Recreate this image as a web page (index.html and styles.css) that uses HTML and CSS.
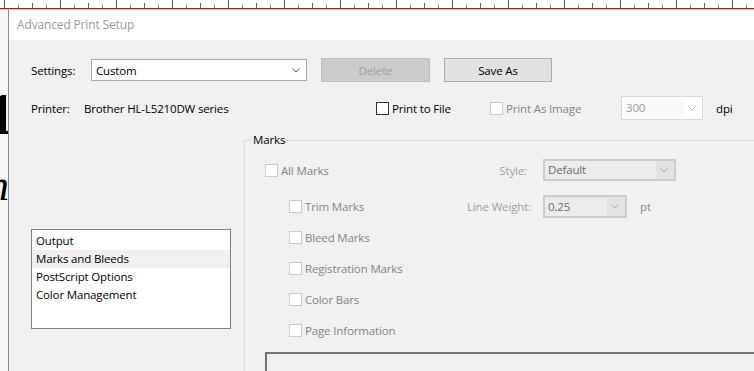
FILE: index.html
```html
<!DOCTYPE html>
<html lang="en">
<head>
    <meta charset="UTF-8">
    <meta name="viewport" content="width=device-width, initial-scale=1.0">
    <title>Advanced Print Setup</title>
    <link rel="stylesheet" href="styles.css">
</head>
<body>
    <div class="screen">
        <div class="ruler"></div>
        <div class="stage">
            <div class="doc-edge">
                <span class="glyph-one">1</span>
                <span class="glyph-n">n</span>
            </div>

            <div class="dialog">
                <div class="titlebar">Advanced Print Setup</div>

                <div class="dialog-body">
                    <div class="row row-settings">
                        <span class="label label-settings">Settings:</span>
                        <div class="combo combo-settings">
                            <span class="combo-value">Custom</span>
                            <svg class="chevron" width="8" height="5" viewBox="0 0 8 5"><path d="M0.5 0.5 L4 4 L7.5 0.5" fill="none" stroke="#606060" stroke-width="1"/></svg>
                        </div>
                        <button class="btn btn-disabled">Delete</button>
                        <button class="btn">Save As</button>
                    </div>

                    <div class="row row-printer">
                        <span class="label label-printer">Printer:</span>
                        <span class="printer-name">Brother HL-L5210DW series</span>
                        <label class="check check-file"><span class="box"></span>Print to File</label>
                        <label class="check check-image is-disabled"><span class="box"></span>Print As Image</label>
                        <div class="combo combo-dpi">
                            <span class="combo-value">300</span>
                            <svg class="chevron" width="8" height="5" viewBox="0 0 8 5"><path d="M0.5 0.5 L4 4 L7.5 0.5" fill="none" stroke="#b8b8b8" stroke-width="1"/></svg>
                        </div>
                        <span class="unit unit-dpi">dpi</span>
                    </div>

                    <div class="main">
                        <div class="sidebar">
                            <ul class="listbox">
                                <li>Output</li>
                                <li class="selected">Marks and Bleeds</li>
                                <li>PostScript Options</li>
                                <li>Color Management</li>
                            </ul>
                        </div>

                        <fieldset class="marks">
                            <legend>Marks</legend>
                            <div class="marks-body">
                                <div class="mark-row row-all">
                                    <label class="check is-disabled mark-check"><span class="box"></span>All Marks</label>
                                    <span class="field-label label-style">Style:</span>
                                    <div class="combo combo-off combo-style">
                                        <span class="combo-value">Default</span>
                                        <svg class="chevron" width="8" height="5" viewBox="0 0 8 5"><path d="M0.5 0.5 L4 4 L7.5 0.5" fill="none" stroke="#b0b0b0" stroke-width="1"/></svg>
                                    </div>
                                </div>
                                <div class="mark-row row-trim">
                                    <label class="check is-disabled mark-check sub"><span class="box"></span>Trim Marks</label>
                                    <span class="field-label label-weight">Line Weight:</span>
                                    <div class="combo combo-off combo-weight">
                                        <span class="combo-value">0.25</span>
                                        <svg class="chevron" width="8" height="5" viewBox="0 0 8 5"><path d="M0.5 0.5 L4 4 L7.5 0.5" fill="none" stroke="#b0b0b0" stroke-width="1"/></svg>
                                    </div>
                                    <span class="unit unit-pt">pt</span>
                                </div>
                                <div class="mark-row row-plain">
                                    <label class="check is-disabled sub"><span class="box"></span>Bleed Marks</label>
                                </div>
                                <div class="mark-row row-plain">
                                    <label class="check is-disabled sub"><span class="box"></span>Registration Marks</label>
                                </div>
                                <div class="mark-row row-plain">
                                    <label class="check is-disabled sub"><span class="box"></span>Color Bars</label>
                                </div>
                                <div class="mark-row row-plain">
                                    <label class="check is-disabled sub"><span class="box"></span>Page Information</label>
                                </div>
                                <div class="preview"></div>
                            </div>
                        </fieldset>
                    </div>
                </div>
            </div>
        </div>
    </div>
</body>
</html>
```

FILE: styles.css
```css
body {
    margin: 0;
    font-family: "Open Sans", "Noto Sans", Arial, sans-serif;
    font-size: 11.5px;
    letter-spacing: -0.15px;
    color: #000;
    background: #fff;
}
.screen {
    width: 754px;
    height: 371px;
    overflow: hidden;
    display: flex;
    flex-direction: column;
}

/* ruler of the document behind the dialog */
.ruler {
    flex: 0 0 8px;
    background-color: #fff;
    background-image:
        linear-gradient(to right, #5a5a5a 1px, transparent 1px),
        linear-gradient(to right, #6a6a6a 1px, transparent 1px),
        linear-gradient(to right, #7a7a7a 1px, transparent 1px);
    background-size: 56px 8px, 28px 5px, 14px 3px;
    background-position: 4px 0, 4px 100%, 4px 100%;
    background-repeat: repeat-x;
    border-bottom: 1px solid #7d2b2b;
}
.stage {
    flex: 1;
    display: flex;
    border-top: 1px solid #f1b5b5;
    min-height: 0;
}
.doc-edge {
    flex: 0 0 8px;
    background: #f7f7f7;
    overflow: hidden;
    display: flex;
    flex-direction: column;
    align-items: flex-end;
    font-family: "Liberation Serif", serif;
    letter-spacing: 0;
}
.glyph-one {
    margin-top: 74px;
    font-size: 60px;
    font-weight: bold;
    line-height: 60px;
    margin-right: -8px;
}
.glyph-n {
    margin-top: 20px;
    font-size: 44px;
    font-style: italic;
    line-height: 44px;
    margin-right: -1px;
}

/* dialog */
.dialog {
    flex: 1;
    border-left: 1px solid #8c8c8c;
    background: #f0f0f0;
    display: flex;
    flex-direction: column;
}
.titlebar {
    height: 31px;
    line-height: 30px;
    background: #fff;
    color: #999;
    font-size: 12px;
    padding-left: 8px;
}
.dialog-body {
    padding: 18px 0 0 22px;
}
.row {
    display: flex;
    align-items: center;
    height: 24px;
}
.row-printer {
    margin-top: 14px;
}
.label-settings { width: 60px; }
.label-printer { width: 53px; }
.printer-name { width: 292px; }

.combo {
    box-sizing: border-box;
    display: flex;
    align-items: center;
    background: #fff;
    border: 1px solid #adadad;
}
.combo-value {
    flex: 1;
    padding-left: 4px;
}
.chevron {
    margin: 0 6px 0 4px;
}
.combo-settings {
    width: 216px;
    height: 22px;
}
.combo-dpi {
    width: 82px;
    height: 24px;
    border-color: #d9d9d9;
    color: #9a9a9a;
}
.combo-dpi .combo-value {
    background: #f9f9f9;
    margin: 2px 0 2px 2px;
    padding-left: 2px;
    line-height: 18px;
}
.btn {
    box-sizing: border-box;
    height: 24px;
    margin-left: 14px;
    width: 108px;
    font: inherit;
    letter-spacing: inherit;
    color: #000;
    background: #e1e1e1;
    border: 1px solid #adadad;
    padding: 0;
}
.btn-disabled {
    width: 109px;
    background: #cccccc;
    border-color: #bfbfbf;
    color: #a0a0a0;
}

/* checkboxes */
.check {
    display: flex;
    align-items: center;
}
.box {
    box-sizing: border-box;
    width: 13px;
    height: 13px;
    border: 1px solid #333;
    background: #fff;
    margin-right: 3px;
}
.check.is-disabled {
    color: #868686;
}
.check.is-disabled .box {
    border-color: #cccccc;
}
.check-file { width: 114px; }
.check-image { width: 131px; }
.unit { color: #000; }
.unit-dpi { margin-left: 13px; }

/* lower part */
.main {
    display: flex;
    margin-top: 12px;
}
.sidebar {
    width: 213px;
    padding-top: 97px;
}
.listbox {
    box-sizing: border-box;
    list-style: none;
    margin: 0;
    padding: 2px 0 0;
    width: 200px;
    height: 100px;
    background: #fff;
    border: 1px solid #828282;
}
.listbox li {
    height: 18px;
    line-height: 18px;
    padding-left: 4px;
}
.listbox li.selected {
    background: #f0f0f0;
}

.marks {
    flex: 1;
    margin: 0 -30px 0 0;
    padding: 0 0 0 6px;
    border: 1px solid #dadada;
    min-width: 0;
}
.marks legend {
    padding: 0 2px;
    line-height: 16px;
}
.marks-body {
    padding: 11px 0 0 14px;
}
.mark-row {
    display: flex;
    align-items: center;
}
.row-all { height: 22px; }
.row-trim { height: 23px; margin-top: 14px; }
.row-plain { height: 31px; }
.row-trim + .row-plain { margin-top: 4px; }
.mark-check { width: 170px; }
.mark-check.sub { width: 146px; }
.sub { padding-left: 24px; }
.field-label {
    color: #a0a0a0;
    text-align: right;
}
.label-style { width: 92px; margin-right: 16px; }
.label-weight { width: 96px; margin-right: 12px; }
.combo-off {
    border: 2px solid #cccccc;
    background: #e2e2e2;
    color: #6e6e6e;
}
.combo-off .combo-value {
    background: #ebebeb;
    line-height: 18px;
    padding-left: 3px;
}
.combo-style { width: 133px; height: 22px; }
.combo-weight { width: 84px; height: 23px; }
.unit-pt { margin-left: 13px; color: #8c8c8c; }

.preview {
    margin-top: 6px;
    height: 40px;
    border: 2px solid #747474;
    border-right: none;
}
```
